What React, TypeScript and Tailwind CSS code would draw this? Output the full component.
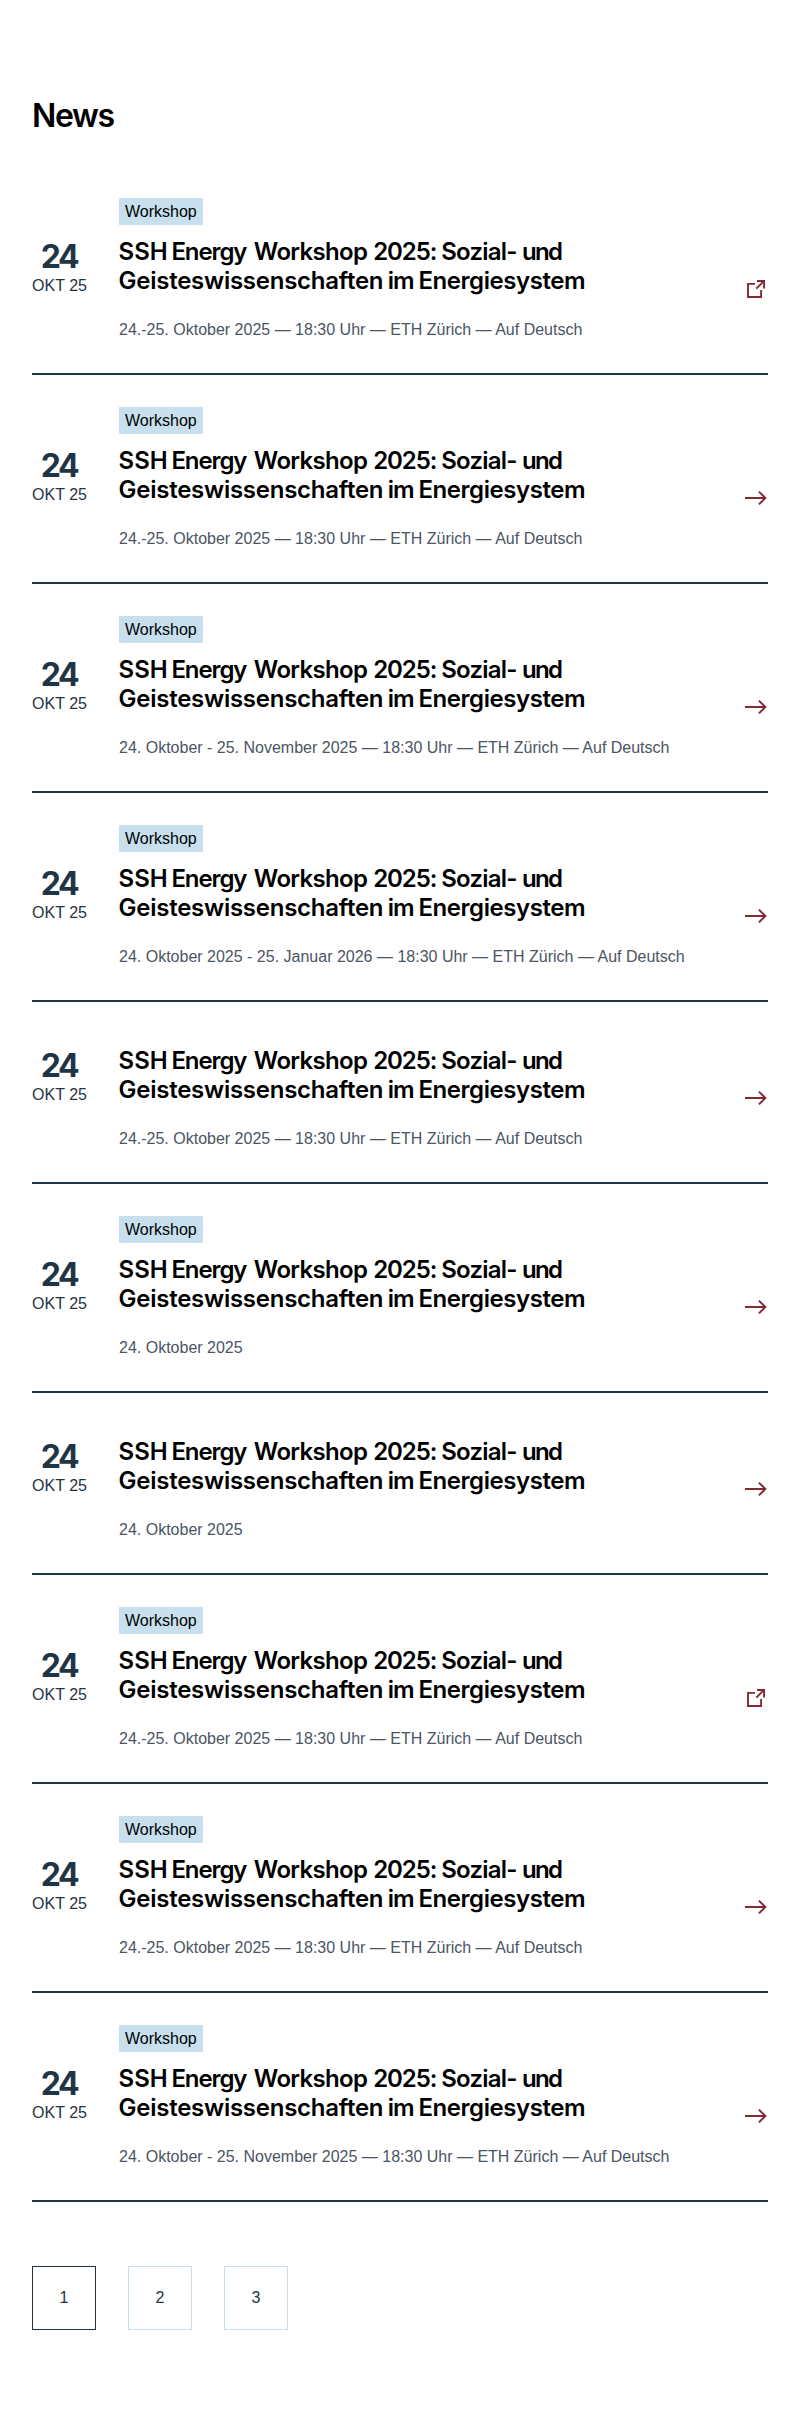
import React from "react";

type Item = { tag?: boolean; external?: boolean; meta: string };

const SHORT = "24.-25. Oktober 2025 — 18:30 Uhr — ETH Zürich — Auf Deutsch";
const MONTHS = "24. Oktober - 25. November 2025 — 18:30 Uhr — ETH Zürich — Auf Deutsch";
const YEARS = "24. Oktober 2025 - 25. Januar 2026 — 18:30 Uhr — ETH Zürich — Auf Deutsch";

const items: Item[] = [
  { tag: true, external: true, meta: SHORT },
  { tag: true, meta: SHORT },
  { tag: true, meta: MONTHS },
  { tag: true, meta: YEARS },
  { meta: SHORT },
  { tag: true, meta: "24. Oktober 2025" },
  { meta: "24. Oktober 2025" },
  { tag: true, external: true, meta: SHORT },
  { tag: true, meta: SHORT },
  { tag: true, meta: MONTHS },
];

function ArrowIcon() {
  return (
    <svg width="24" height="24" viewBox="0 0 24 24" fill="none" stroke="#812A33" strokeWidth="2">
      <path d="M1 12H22M14.9 5.6L21.3 12L14.9 18.4" />
    </svg>
  );
}

function ExternalIcon() {
  return (
    <svg width="24" height="24" viewBox="0 0 24 24" fill="none" stroke="#812A33" strokeWidth="1.9">
      <path d="M11 6.9H4V20H17.1V13" />
      <path d="M13 4H20.1V11.5M20 4L12.3 11.7" />
    </svg>
  );
}

function Title() {
  return (
    <h3 className="-ml-[0.4px] mt-3 whitespace-nowrap font-[Inter,sans-serif] text-2xl font-semibold leading-[29px] text-black">
      <span className="mr-[-2.4px]">SSH</span> <span className="mr-[1.4px] tracking-[-1.1px]">Energy</span>{" "}
      <span className="mr-[-0.2px] tracking-[-0.67px]">Workshop</span>{" "}
      <span className="mr-[-1.1px] tracking-[-1.1px]">2025:</span>{" "}
      <span className="mr-[-0.9px] tracking-[-0.76px]">Sozial-</span> <span className="tracking-[-1.6px]">und</span>
      <br />
      <span className="mr-[-1.6px] tracking-[-0.26px]">Geisteswissenschaften</span>{" "}
      <span className="mr-[-1.2px] tracking-[-1px]">im</span> <span className="tracking-[-0.44px]">Energiesystem</span>
    </h3>
  );
}

function Row({ item }: { item: Item }) {
  return (
    <li className="flex items-end border-b-2 border-[#1F3444] pt-8">
      <div className="mb-[75px] w-[55px] shrink-0 text-center text-[#1F3444]">
        <div className="pr-px font-[Inter,sans-serif] text-[32px] font-bold leading-[35px] tracking-[-2.4px]">24</div>
        <div className="whitespace-nowrap leading-6">OKT 25</div>
      </div>
      <div className="ml-8 flex-1">
        {item.tag && (
          <div className="flex">
            <span className="h-[27px] bg-[#C8E0EE] px-1.5 leading-[27px] text-black">Workshop</span>
          </div>
        )}
        <Title />
        <p className="mb-[31px] mt-[23px] leading-6 text-[#4B5563]">{item.meta}</p>
      </div>
      <div className="mb-[72px] shrink-0">{item.external ? <ExternalIcon /> : <ArrowIcon />}</div>
    </li>
  );
}

export default function App() {
  return (
    <main className="min-h-[2426px] bg-white px-8 pt-[97px] font-['Liberation_Sans',Arial,sans-serif] text-base">
      <h2 className="h-[69px] font-[Inter,sans-serif] text-[32px] font-semibold leading-[38px] tracking-[-1.4px] text-black">
        News
      </h2>
      <ul>
        {items.map((item, i) => (
          <Row key={i} item={item} />
        ))}
      </ul>
      <nav className="mt-16 flex gap-8 text-[#1F3444]">
        <a className="flex size-16 items-center justify-center border border-[#1F3444]">1</a>
        <a className="flex size-16 items-center justify-center border border-[#C8E0EE]">2</a>
        <a className="flex size-16 items-center justify-center border border-[#C8E0EE]">3</a>
      </nav>
    </main>
  );
}
